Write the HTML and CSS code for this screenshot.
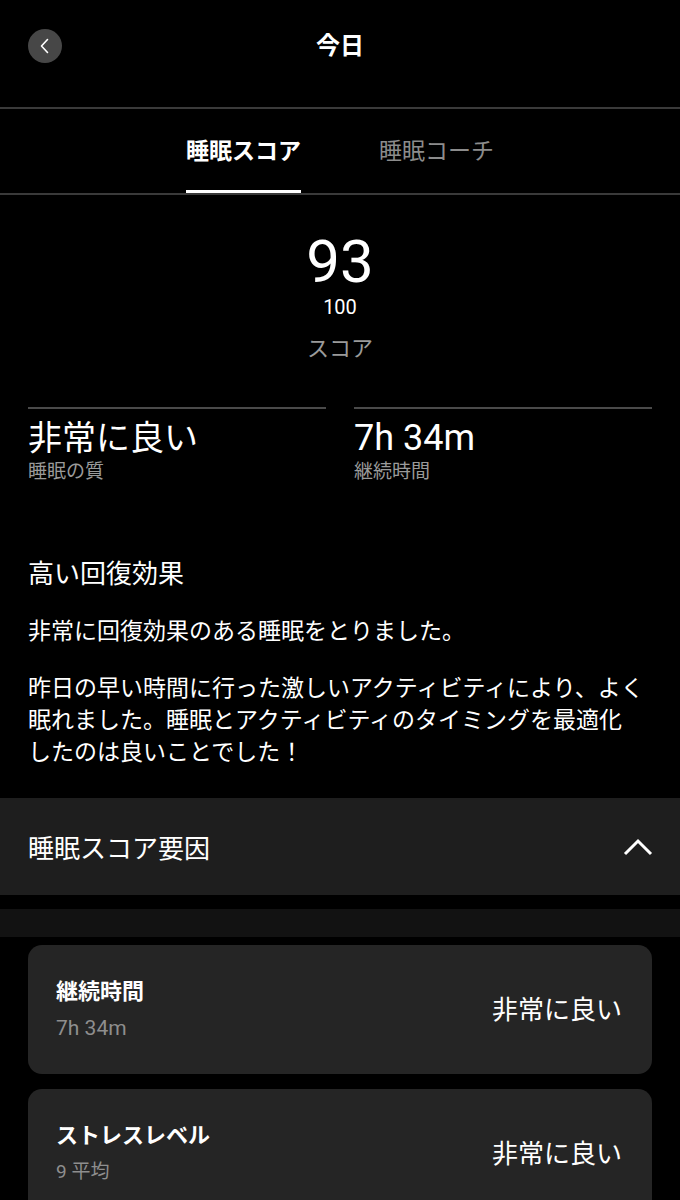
FILE: index.html
```html
<!DOCTYPE html>
<html lang="ja">
<head>
    <meta charset="UTF-8">
    <meta name="viewport" content="width=device-width, initial-scale=1.0">
    <title>今日</title>
    <link rel="stylesheet" href="styles.css">
</head>
<body>
    <div class="topbar">
        <button class="back-btn" aria-label="戻る">
            <svg width="14" height="16" viewBox="0 0 14 16">
                <path d="M9.5 1.5 L3.5 8 L9.5 14.5" fill="none" stroke="#fff" stroke-width="1.6" stroke-linecap="round" stroke-linejoin="round"/>
            </svg>
        </button>
        <h1 class="title">今日</h1>
        <span></span>
    </div>

    <div class="tabs">
        <div class="tab active">睡眠スコア</div>
        <div class="tab">睡眠コーチ</div>
    </div>

    <div class="score">
        <div class="score-value">93</div>
        <div class="score-max">100</div>
        <div class="score-label">スコア</div>
    </div>

    <div class="stats">
        <div class="stat">
            <div class="stat-value">非常に良い</div>
            <div class="stat-label">睡眠の質</div>
        </div>
        <div class="stat">
            <div class="stat-value num">7h 34m</div>
            <div class="stat-label">継続時間</div>
        </div>
    </div>

    <div class="summary">
        <h2>高い回復効果</h2>
        <p>非常に回復効果のある睡眠をとりました。</p>
        <p>昨日の早い時間に行った激しいアクティビティにより、よく眠れました。睡眠とアクティビティのタイミングを最適化<br>したのは良いことでした！</p>
    </div>

    <div class="factors-header">
        <span>睡眠スコア要因</span>
        <svg width="32" height="20" viewBox="0 0 32 20">
            <path d="M3 17 L16 4 L29 17" fill="none" stroke="#fff" stroke-width="3" stroke-linejoin="miter"/>
        </svg>
    </div>
    <div class="factors-strip"></div>

    <div class="factors">
        <div class="factor-card">
            <div>
                <div class="factor-name">継続時間</div>
                <div class="factor-detail num">7h 34m</div>
            </div>
            <div class="factor-rating">非常に良い</div>
        </div>
        <div class="factor-card">
            <div>
                <div class="factor-name">ストレスレベル</div>
                <div class="factor-detail">9 平均</div>
            </div>
            <div class="factor-rating">非常に良い</div>
        </div>
    </div>
</body>
</html>
```

FILE: styles.css
```css
body {
    margin: 0;
    background-color: #000;
    color: #fff;
    font-family: Roboto, "Noto Sans CJK JP", sans-serif;
}

/* 上部バー */
.topbar {
    display: grid;
    grid-template-columns: 34px 1fr 34px;
    align-items: center;
    padding: 29px 28px 44px;
    border-bottom: 2px solid #3a3a3a;
}
.back-btn {
    width: 34px;
    height: 34px;
    border: none;
    border-radius: 50%;
    background-color: #474747;
    padding: 0;
    display: flex;
    align-items: center;
    justify-content: center;
}
.title {
    margin: 0;
    text-align: center;
    font-size: 24px;
    font-weight: 700;
    line-height: 34px;
}

/* タブ */
.tabs {
    display: flex;
    justify-content: center;
    gap: 78px;
    border-bottom: 2px solid #3a3a3a;
}
.tab {
    font-size: 23px;
    line-height: 30px;
    padding: 28px 0 23px;
    border-bottom: 3px solid transparent;
    color: #8c8c8c;
}
.tab.active {
    color: #fff;
    font-weight: 700;
    border-bottom-color: #fff;
}

/* スコア */
.score {
    text-align: center;
    padding-top: 35px;
}
.score-value {
    font-size: 60px;
    line-height: 64px;
}
.score-max {
    font-size: 20px;
    line-height: 26px;
}
.score-label {
    margin-top: 14px;
    font-size: 22px;
    line-height: 30px;
    color: #9a9a9a;
}

.stats {
    display: grid;
    grid-template-columns: 1fr 1fr;
    gap: 28px;
    margin: 43px 28px 0;
}
.stat {
    border-top: 2px solid #4a4a4a;
    padding-top: 9px;
}
.stat-value {
    font-size: 34px;
    line-height: 40px;
}
.stat-value.num {
    font-size: 36px;
}
.stat-label {
    margin-top: 2px;
    font-size: 19px;
    line-height: 24px;
    color: #9a9a9a;
}

/* 説明 */
.summary {
    margin: 73px 28px 0;
}
.summary h2 {
    margin: 0;
    font-size: 26px;
    font-weight: 400;
    line-height: 34px;
}
.summary p {
    margin: 25px 0 0;
    font-size: 23px;
    line-height: 32px;
}

/* 要因 */
.factors-header {
    margin-top: 29px;
    height: 97px;
    background-color: #1e1e1e;
    display: flex;
    align-items: center;
    justify-content: space-between;
    padding: 0 26px 0 28px;
    font-size: 26px;
}
.factors-strip {
    margin-top: 14px;
    height: 28px;
    background-color: #121212;
}
.factors {
    display: flex;
    flex-direction: column;
    gap: 15px;
    padding: 8px 28px 0;
}
.factor-card {
    height: 129px;
    border-radius: 14px;
    background-color: #252525;
    display: flex;
    align-items: center;
    justify-content: space-between;
    padding: 0 30px 0 28px;
}
.factor-name {
    font-size: 22px;
    font-weight: 700;
    line-height: 28px;
}
.factor-detail {
    margin-top: 9px;
    font-size: 19px;
    line-height: 26px;
    color: #8e8e8e;
}
.factor-detail.num {
    font-size: 21px;
}
.factor-rating {
    font-size: 26px;
    line-height: 32px;
}
```
